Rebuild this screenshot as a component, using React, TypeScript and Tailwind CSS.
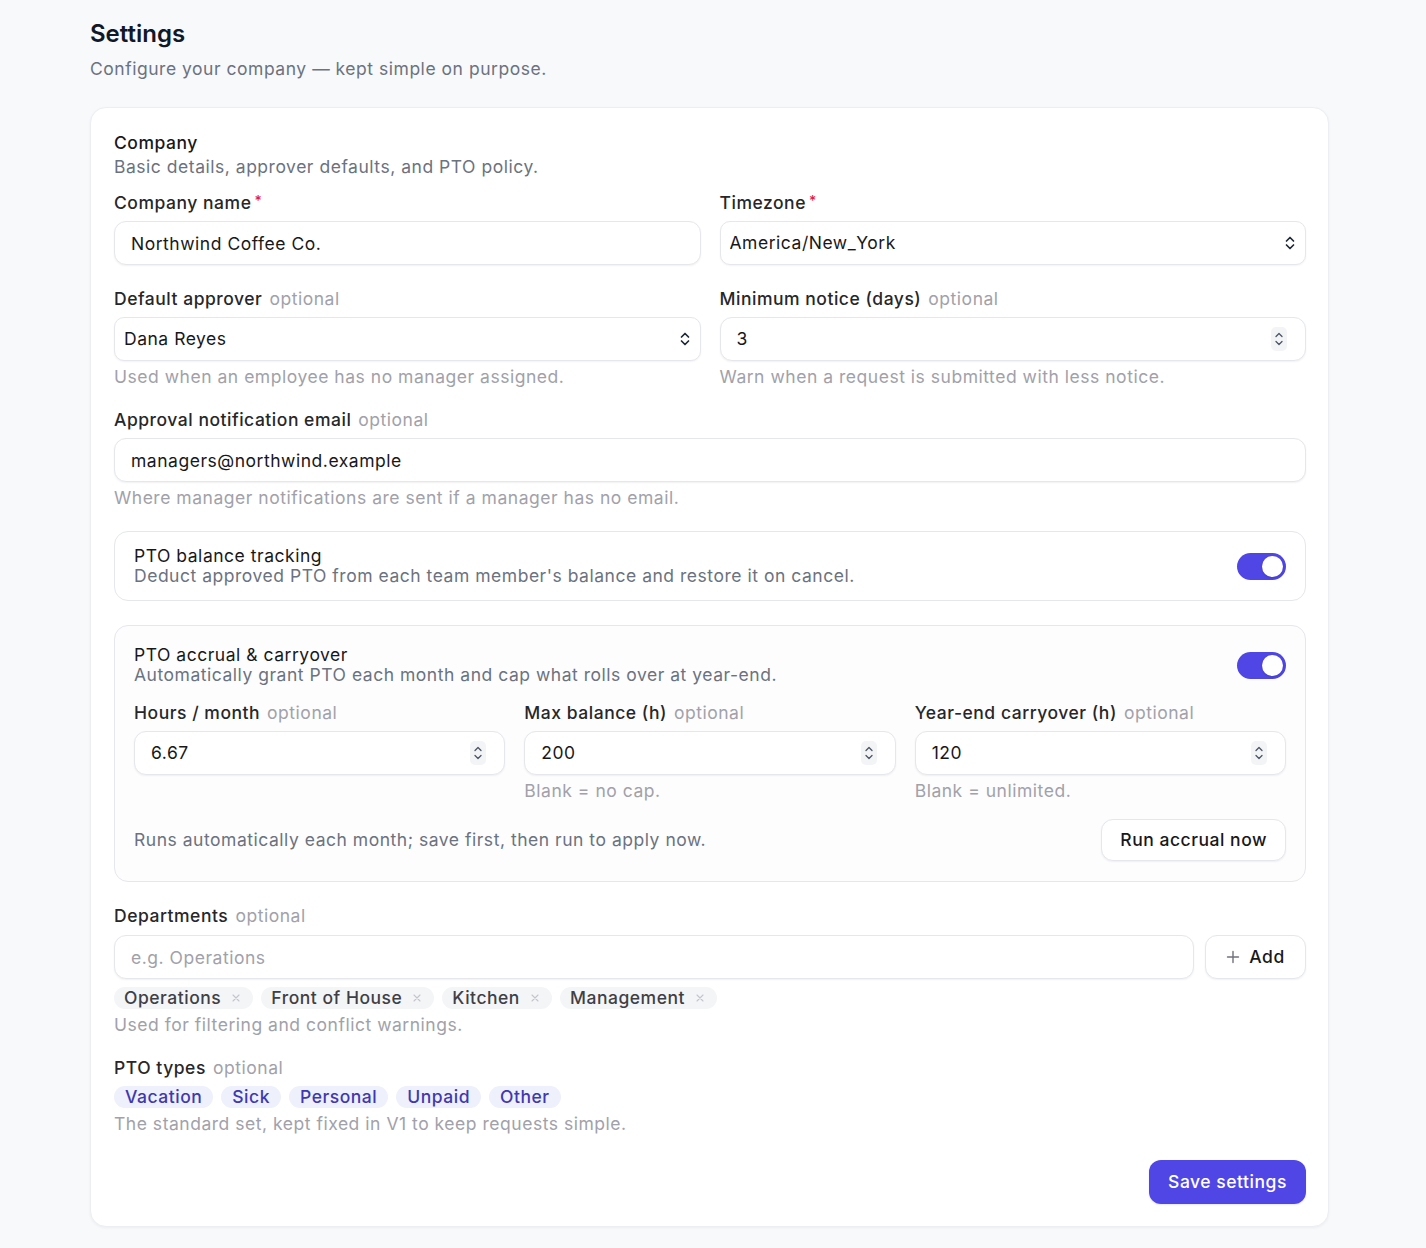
import { useState } from "react";

type FieldProps = {
  label: string;
  required?: boolean;
  optional?: boolean;
  help?: string;
  children: React.ReactNode;
};

function Field({ label, required, optional, help, children }: FieldProps) {
  return (
    <div>
      <label className="block h-6 leading-6 font-medium text-[#27272a]">
        {label}
        {required && <span className="ml-[3px] align-[3px] text-[14px] leading-none text-[#e11d48]">*</span>}
        {optional && <span className="ml-[7px] font-normal text-[#a1a1aa]">optional</span>}
      </label>
      <div className="mt-[6px]">{children}</div>
      {help && <p className="mt-1 leading-6 text-[#a1a1aa]">{help}</p>}
    </div>
  );
}

function SelectChevron() {
  return (
    <svg width="12" height="16" viewBox="0 0 12 16" fill="none" className="shrink-0">
      <path d="M2.5 6 L6 2.5 L9.5 6" stroke="#1f2937" strokeWidth="1.7" strokeLinecap="round" strokeLinejoin="round" />
      <path d="M2.5 10 L6 13.5 L9.5 10" stroke="#1f2937" strokeWidth="1.7" strokeLinecap="round" strokeLinejoin="round" />
    </svg>
  );
}

function Spinner() {
  return (
    <span className="flex h-[24px] w-[16px] shrink-0 flex-col items-center justify-center rounded-[5px] bg-[#f3f4f6]">
      <svg width="10" height="20" viewBox="0 0 10 20" fill="none">
        <path d="M2 7.5 L5 4.5 L8 7.5" stroke="#4b5563" strokeWidth="1.3" strokeLinecap="round" strokeLinejoin="round" />
        <path d="M2 12.5 L5 15.5 L8 12.5" stroke="#4b5563" strokeWidth="1.3" strokeLinecap="round" strokeLinejoin="round" />
      </svg>
    </span>
  );
}

function TextBox({ value, placeholder }: { value?: string; placeholder?: string }) {
  return (
    <input
      readOnly
      value={value}
      placeholder={placeholder}
      className="h-[44px] w-full rounded-xl border border-[#e5e7eb] bg-white px-4 text-[#18181b] shadow-[0_1px_2px_rgba(16,24,40,0.06)] outline-none placeholder:text-[#a1a1aa]"
    />
  );
}

function SelectBox({ value }: { value: string }) {
  return (
    <div className="flex h-[44px] w-full items-center rounded-[10px] border border-[#e5e7eb] bg-white pl-[9px] pr-[9px] shadow-[0_1px_2px_rgba(16,24,40,0.05)]">
      <select
        value={value}
        onChange={() => {}}
        className="flex-1 appearance-none bg-transparent text-[#18181b] outline-none"
      >
        <option value={value}>{value}</option>
      </select>
      <SelectChevron />
    </div>
  );
}

function NumberBox({ value }: { value: string }) {
  return (
    <div className="flex h-[44px] w-full items-center rounded-xl border border-[#e5e7eb] bg-white pl-4 pr-[18px] shadow-[0_1px_2px_rgba(16,24,40,0.06)]">
      <input readOnly value={value} className="min-w-0 flex-1 bg-transparent text-[#18181b] outline-none" />
      <Spinner />
    </div>
  );
}

function Toggle({ on, onChange }: { on: boolean; onChange: () => void }) {
  return (
    <button
      type="button"
      onClick={onChange}
      className={`flex h-[27px] w-[49px] shrink-0 items-center rounded-full p-[3px] ${
        on ? "justify-end bg-[#4f46e5]" : "justify-start bg-[#d4d4d8]"
      }`}
    >
      <span className="h-[21px] w-[21px] rounded-full bg-white shadow-sm" />
    </button>
  );
}

const departments = ["Operations", "Front of House", "Kitchen", "Management"];
const ptoTypes = ["Vacation", "Sick", "Personal", "Unpaid", "Other"];

export default function App() {
  const [tracking, setTracking] = useState(true);
  const [accrual, setAccrual] = useState(true);

  return (
    <div className="min-h-screen bg-[#f8f9fb] pb-[22px] pl-[90px] pt-[18px] font-['Inter',sans-serif] text-[17.5px] tracking-[0.03em] text-[#18181b]">
      <div className="w-[1239px]">
        <h1 className="text-[24px] font-semibold leading-8 tracking-normal text-[#111827]">Settings</h1>
        <p className="mt-[7px] leading-6 text-[#6b7280]">Configure your company — kept simple on purpose.</p>

        <div className="mt-[26px] rounded-2xl border border-[#eceef1] bg-white pb-[22px] pl-[23px] pr-[22px] pt-[23px] shadow-[0_1px_3px_rgba(16,24,40,0.05)]">
          <h2 className="font-medium leading-6 text-[#18181b]">Company</h2>
          <p className="leading-6 text-[#6b7280]">Basic details, approver defaults, and PTO policy.</p>

          <div className="mt-3 grid grid-cols-2 gap-x-[19px] gap-y-[22px]">
            <Field label="Company name" required>
              <TextBox value="Northwind Coffee Co." />
            </Field>
            <Field label="Timezone" required>
              <SelectBox value="America/New_York" />
            </Field>
            <Field label="Default approver" optional help="Used when an employee has no manager assigned.">
              <SelectBox value="Dana Reyes" />
            </Field>
            <Field label="Minimum notice (days)" optional help="Warn when a request is submitted with less notice.">
              <NumberBox value="3" />
            </Field>
          </div>

          <div className="mt-[19px]">
            <Field label="Approval notification email" optional help="Where manager notifications are sent if a manager has no email.">
              <TextBox value="managers@northwind.example" />
            </Field>
          </div>

          <div className="mt-[21px] flex items-center justify-between rounded-[14px] border border-[#e5e7eb] px-[19px] py-[14px]">
            <div>
              <div className="leading-5 text-[#18181b]">PTO balance tracking</div>
              <div className="leading-5 text-[#6b7280]">Deduct approved PTO from each team member's balance and restore it on cancel.</div>
            </div>
            <Toggle on={tracking} onChange={() => setTracking(!tracking)} />
          </div>

          <div className="mt-6 rounded-[14px] border border-[#e5e7eb] bg-[#fdfdfe] px-[19px] pb-5 pt-[19px]">
            <div className="flex items-center justify-between">
              <div>
                <div className="leading-5 text-[#18181b]">PTO accrual &amp; carryover</div>
                <div className="leading-5 text-[#6b7280]">Automatically grant PTO each month and cap what rolls over at year-end.</div>
              </div>
              <Toggle on={accrual} onChange={() => setAccrual(!accrual)} />
            </div>

            <div className="mt-4 grid grid-cols-3 gap-x-[19px]">
              <Field label="Hours / month" optional>
                <NumberBox value="6.67" />
              </Field>
              <Field label="Max balance (h)" optional help="Blank = no cap.">
                <NumberBox value="200" />
              </Field>
              <Field label="Year-end carryover (h)" optional help="Blank = unlimited.">
                <NumberBox value="120" />
              </Field>
            </div>

            <div className="mt-4 flex items-center justify-between">
              <p className="text-[#6b7280]">Runs automatically each month; save first, then run to apply now.</p>
              <button
                type="button"
                className="h-[42px] rounded-xl border border-[#e5e7eb] bg-white px-[18px] font-medium text-[#18181b] shadow-[0_1px_2px_rgba(16,24,40,0.06)]"
              >
                Run accrual now
              </button>
            </div>
          </div>

          <div className="mt-[22px]">
            <label className="block font-medium leading-6 text-[#27272a]">
              Departments <span className="ml-[2px] font-normal text-[#a1a1aa]">optional</span>
            </label>
            <div className="mt-[7px] flex gap-[11px]">
              <div className="flex-1">
                <TextBox placeholder="e.g. Operations" />
              </div>
              <button
                type="button"
                className="flex h-[44px] w-[101px] items-center justify-center gap-[9px] rounded-xl border border-[#e5e7eb] bg-white font-medium text-[#18181b] shadow-[0_1px_2px_rgba(16,24,40,0.06)]"
              >
                <svg width="14" height="14" viewBox="0 0 14 14" fill="none">
                  <path d="M7 1.5 V12.5 M1.5 7 H12.5" stroke="#71717a" strokeWidth="1.4" strokeLinecap="round" />
                </svg>
                Add
              </button>
            </div>
            <div className="mt-2 flex flex-wrap gap-2">
              {departments.map((d) => (
                <span key={d} className="flex h-[22px] items-center gap-[11px] rounded-full bg-[#f4f5f7] pl-[10px] pr-[13px] font-medium text-[#3f3f46]">
                  {d}
                  <svg width="8" height="8" viewBox="0 0 8 8" fill="none">
                    <path d="M1 1 L7 7 M7 1 L1 7" stroke="#c4c4cc" strokeWidth="1.1" strokeLinecap="round" />
                  </svg>
                </span>
              ))}
            </div>
            <p className="mt-1 leading-6 text-[#a1a1aa]">Used for filtering and conflict warnings.</p>
          </div>

          <div className="mt-[19px]">
            <label className="block font-medium leading-6 text-[#27272a]">
              PTO types <span className="ml-[2px] font-normal text-[#a1a1aa]">optional</span>
            </label>
            <div className="mt-[6px] flex flex-wrap gap-2">
              {ptoTypes.map((t) => (
                <span key={t} className="flex h-[22px] items-center rounded-full bg-[#eef0fb] px-[11px] font-medium text-[#3f38b0]">
                  {t}
                </span>
              ))}
            </div>
            <p className="mt-1 leading-6 text-[#a1a1aa]">The standard set, kept fixed in V1 to keep requests simple.</p>
          </div>

          <div className="mt-6 flex justify-end">
            <button
              type="button"
              className="h-[44px] w-[157px] rounded-xl bg-[#4f46e5] font-medium text-white shadow-[0_1px_2px_rgba(16,24,40,0.1)]"
            >
              Save settings
            </button>
          </div>
        </div>
      </div>
    </div>
  );
}
